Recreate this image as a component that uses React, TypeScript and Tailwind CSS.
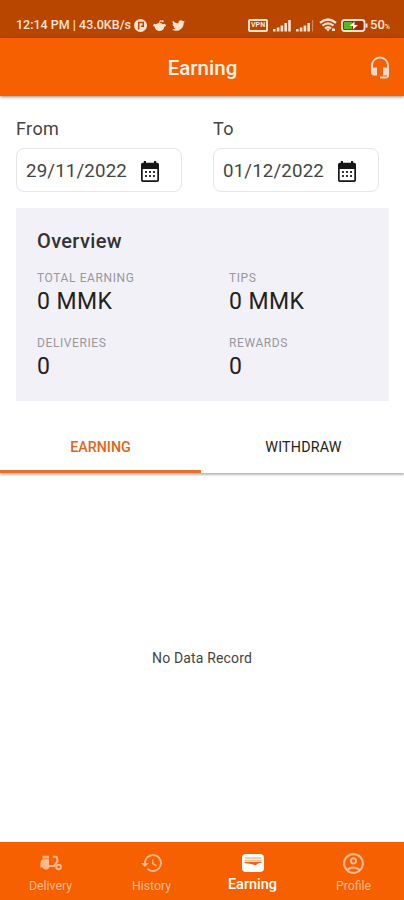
import React from "react";
import { FaTwitter } from "react-icons/fa";
import { MdHeadsetMic, MdHistory, MdOutlineAccountCircle } from "react-icons/md";

interface IDateField {
  label: string;
  value: string;
}

interface IStat {
  label: string;
  value: string;
}

interface INavItem {
  label: string;
  icon: React.ReactNode;
  active?: boolean;
}

const stats: IStat[] = [
  { label: "TOTAL EARNING", value: "0 MMK" },
  { label: "TIPS", value: "0 MMK" },
  { label: "DELIVERIES", value: "0" },
  { label: "REWARDS", value: "0" },
];

const CalendarIcon = () => (
  <svg className="h-[21px] w-[18px]" viewBox="0 0 18 21">
    <path
      fill="#161616"
      fillRule="evenodd"
      d="M2.800 0h2.200v1.800h8V0h2.200v1.800h1Q18 1.800 18 3.600V19.200Q18 21 16.200 21H1.800Q0 21 0 19.200V3.600Q0 1.800 1.800 1.800h1ZM1.700 8v11.200h14.600V8Z"
    />
    <path
      fill="#333"
      d="M4 10h2v2H4zm4 0h2v2H8zm4 0h2v2h-2zM4 14h2v2H4zm4 0h2v2H8zm4 0h2v2h-2z"
    />
  </svg>
);

const ScooterIcon = () => (
  <svg className="h-[16px] w-[22px]" viewBox="0 0 22 16">
    <path
      fill="currentColor"
      d="M2.500.800h6.500v2.700H2.500zM3 4.200h6V10h4.400l3.100-4.200L15.800 2.800h-3V.800h3.500q1.200 0 1.500 1.200l.9 4.200-3.900 5.800H9.400a3.700 3.700 0 0 1-6.900.5H.4V8.500Q.4 5 3 4.200z"
    />
    <circle cx="18.600" cy="12" r="2.300" fill="none" stroke="currentColor" strokeWidth="2" />
  </svg>
);

const WalletIcon = () => (
  <svg className="h-[18px] w-[22px]" viewBox="0 0 22 18">
    <rect width="22" height="18" rx="4" fill="#fff" />
    <path d="M3 4h16" stroke="#f66000" strokeWidth="1.100" opacity=".6" />
    <path d="M2.500 6.300h17" stroke="#f66000" strokeWidth="1" opacity=".5" />
    <path d="M2.500 7.800h17v1.200h-2.500l-3.500 2.300L9 9.900 2.500 9z" fill="#f0641a" />
  </svg>
);

const RedditIcon = () => (
  <svg className="h-[13px] w-[13px]" viewBox="0 0 13 13">
    <ellipse cx="6.500" cy="8" rx="4.700" ry="4" fill="currentColor" />
    <circle cx="1.700" cy="6.300" r="1.500" fill="currentColor" />
    <circle cx="11.300" cy="6.300" r="1.500" fill="currentColor" />
    <path d="M6.500 5 7 1.800l2.500.5" fill="none" stroke="currentColor" />
    <circle cx="9.700" cy="2.200" r="1" fill="currentColor" />
  </svg>
);

const SignalIcon = ({ weak }: { weak?: boolean }) => (
  <svg className="h-[13px] w-[18px]" viewBox="0 0 18 13">
    <path
      fill="#fbe3d3"
      d="M0 10h2.600v2.500H0zM3.800 8.500h2.600v4H3.800zM7.600 6.500h2.600v6H7.600zM11.400 4H14v8.500h-2.600z"
    />
    <path
      fill="#fbe3d3"
      opacity={weak ? 0.4 : 1}
      d={weak ? "M16 1h1.200v11.500H16z" : "M15.200 1h2.600v11.500h-2.600z"}
    />
  </svg>
);

const WifiIcon = () => (
  <svg className="h-[14px] w-[18px]" viewBox="0 0 18 14">
    <g fill="none" stroke="#fbe3d3" strokeWidth="2.200">
      <path d="M1 4.800Q9-1.800 17 4.800" />
      <path d="M3.500 7.700Q9 3.200 14.500 7.700" />
      <path d="M6 10.500Q9 8 12 10.500" />
    </g>
    <path fill="#fbe3d3" d="m9 13.500-2-2.500h4zM13 10.500h3v2.500h-3z" />
  </svg>
);

const BatteryIcon = () => (
  <svg className="h-[13px] w-[27px]" viewBox="0 0 27 13">
    <rect x="1" y="1" width="22.500" height="11" rx="2.500" fill="#a32a06" stroke="#fbe3d3" strokeWidth="1.800" />
    <path d="M3 3h8v7H3z" fill="#55b526" />
    <path d="m13.500 2.500-5 4.500h3.500v3.500L17 6h-3.500z" fill="#fff" />
    <path d="M24.500 4.500h2v4h-2z" fill="#fbe3d3" />
  </svg>
);

const StatusBar = () => (
  <div className="flex h-[38px] items-end justify-between bg-[#b84500] pr-[14px] pb-[5px] pl-4 text-[#fbe3d3]">
    <div className="flex h-4 items-center">
      <span className="w-[116px] text-[12.500px] font-medium whitespace-nowrap">
        12:14 PM | 43.0KB/s
      </span>
      <svg className="ml-[2px] h-[13px] w-[13px]" viewBox="0 0 13 13">
        <circle cx="6.500" cy="6.500" r="6.500" fill="#fbe3d3" />
        <path d="M4.700 10.500V3.400h4.600v3.800H7" fill="none" stroke="#b84500" strokeWidth="1.500" />
      </svg>
      <span className="ml-[6px]">
        <RedditIcon />
      </span>
      <FaTwitter className="ml-[6px] h-[13px] w-[13px]" />
    </div>
    <div className="flex h-4 items-center">
      <span className="flex h-[13px] w-[20px] items-center justify-center rounded-[2px] border-2 border-[#fbe3d3] text-[7px] font-bold">
        VPN
      </span>
      <span className="ml-[5px] flex gap-[5px]">
        <SignalIcon />
        <SignalIcon weak />
      </span>
      <span className="ml-[5px]">
        <WifiIcon />
      </span>
      <span className="ml-[4px]">
        <BatteryIcon />
      </span>
      <span className="ml-[2px] text-[13px] font-medium">
        50<span className="text-[7px]">%</span>
      </span>
    </div>
  </div>
);

const Header = () => (
  <header className="relative z-10 flex h-[58px] items-center bg-[#f66000] pr-3 pl-[13px] shadow-[0_1px_3px_rgba(0,0,0,0.45)]">
    <div className="w-6" />
    <h1 className="mt-[3px] flex-1 text-center text-[20.500px] font-medium text-[#fff3ea]">
      Earning
    </h1>
    <MdHeadsetMic className="h-[25px] w-6 text-[#ead9d2]" />
  </header>
);

const DateField = ({ label, value }: IDateField) => (
  <div className="w-[166px]">
    <div className="text-[18px] leading-[26px] tracking-[0.400px] text-[#444]">{label}</div>
    <button className="mt-1.5 flex h-[44px] w-full items-center rounded-lg border border-[#e6e6e8] pt-[2px] pl-[9px] text-[#444]">
      <span className="w-[115px] text-left text-[18.700px] tracking-[0.150px]">{value}</span>
      <CalendarIcon />
    </button>
  </div>
);

const Overview = () => (
  <section className="mr-[15px] ml-4 mt-4 h-[193px] bg-[#f2f1f7] pt-[21px] pl-[21px]">
    <h2 className="text-[20px] leading-6 font-medium tracking-[0.350px] text-[#333]">Overview</h2>
    <div className="mt-[17px] grid grid-cols-[192px_1fr] gap-y-[21px]">
      {stats.map((stat) => (
        <div key={stat.label} className="h-11">
          <div className="text-[12px] leading-4 tracking-[0.600px] text-[#98979d]">
            {stat.label}
          </div>
          <div className="text-[23px] leading-8 tracking-[0.400px] text-[#222]">{stat.value}</div>
        </div>
      ))}
    </div>
  </section>
);

const Tabs = () => (
  <div className="mt-[19px] flex h-[53px] text-center text-[14.300px] font-medium shadow-[0_2px_2px_rgba(0,0,0,0.28)]">
    <button className="flex-1 border-b-[3px] border-[#e8702a] pt-[5px] text-[#e36414]">EARNING</button>
    <button className="flex-1 border-b-[3px] border-transparent pt-[5px] pl-[2px] font-normal tracking-[0.200px] text-[#222]">
      WITHDRAW
    </button>
  </div>
);

const navItems: INavItem[] = [
  { label: "Delivery", icon: <ScooterIcon /> },
  { label: "History", icon: <MdHistory className="h-6 w-6" /> },
  { label: "Earning", icon: <WalletIcon />, active: true },
  { label: "Profile", icon: <MdOutlineAccountCircle className="h-[25px] w-[25px]" /> },
];

const BottomNav = () => (
  <nav className="grid h-[58px] grid-cols-4 bg-[#f66000] pt-[9px]">
    {navItems.map(({ label, icon, active }) => (
      <button
        key={label}
        className={`flex flex-col items-center ${active ? "text-white" : "text-[#ffb98c]"}`}
      >
        <span className="flex h-6 items-center">{icon}</span>
        <span
          className={
            active
              ? "text-[14.500px] leading-[19px] font-medium"
              : "text-[12.300px] leading-[22px]"
          }
        >
          {label}
        </span>
      </button>
    ))}
  </nav>
);

const App = () => {
  return (
    <div className="flex h-[900px] w-[404px] flex-col bg-white font-[Roboto,sans-serif]">
      <StatusBar />
      <Header />
      <div className="flex gap-[31px] px-4 pt-5">
        <DateField label="From" value="29/11/2022" />
        <DateField label="To" value="01/12/2022" />
      </div>
      <Overview />
      <Tabs />
      <main className="flex flex-1 items-center justify-center pt-[2px] text-[14px] tracking-[0.150px] text-[#444]">
        No Data Record
      </main>
      <BottomNav />
    </div>
  );
};

export default App;
